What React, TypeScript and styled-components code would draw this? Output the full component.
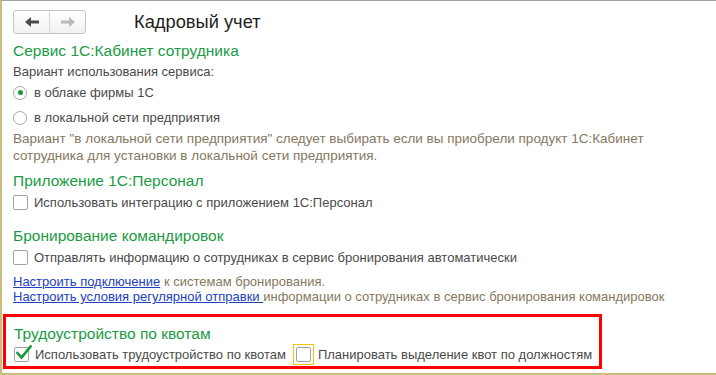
import styled, { createGlobalStyle } from "styled-components";

const GlobalStyle = createGlobalStyle`
  html, body {
    margin: 0;
    padding: 0;
    background: #ffffff;
  }
  body {
    font-family: "Liberation Sans", Arial, sans-serif;
  }
`;

const Frame = styled.div`
  width: 716px;
  height: 375px;
  box-sizing: border-box;
  border-top: 1px solid #a3a3a3;
  border-left: 2px solid #cbbd7c;
  border-bottom: 2px solid #cbbd7c;
  background: #ffffff;
  overflow: hidden;
  padding-left: 11px;
`;

const Header = styled.div`
  display: flex;
  align-items: center;
  height: 24px;
  margin-top: 9px;
`;

const NavGroup = styled.div`
  display: flex;
  width: 73px;
  height: 24px;
  box-sizing: border-box;
  border: 1px solid #c4c4c4;
  border-radius: 3px;
  background: linear-gradient(#ffffff, #f1f1f1);
`;

const NavButton = styled.div<{ $divider?: boolean }>`
  flex: 1;
  display: flex;
  align-items: center;
  justify-content: center;
  border-right: ${({ $divider }) => ($divider ? "1px solid #d6d6d6" : "none")};
`;

const Title = styled.div`
  margin-left: 48px;
  font-size: 18.3px;
  color: #1e1e1e;
`;

const Section = styled.div<{ $gap?: number }>`
  margin-top: ${({ $gap }) => $gap ?? 0}px;
`;

const SectionTitle = styled.div`
  font-size: 15.5px;
  line-height: 20px;
  color: #1b9b44;
`;

const Text = styled.div<{ $note?: boolean }>`
  font-size: ${({ $note }) => ($note ? 13.5 : 13)}px;
  line-height: ${({ $note }) => ($note ? 17 : 16)}px;
  color: ${({ $note }) => ($note ? "#85785e" : "#4a4a4a")};
`;

const Row = styled.div<{ $height?: number }>`
  display: flex;
  align-items: center;
  height: ${({ $height }) => $height ?? 20}px;
  font-size: 13px;
  color: #4a4a4a;
  white-space: nowrap;
`;

const Radio = styled.span<{ $on?: boolean }>`
  width: 14px;
  height: 14px;
  box-sizing: border-box;
  border: 1px solid #a8a8a8;
  border-radius: 50%;
  margin-right: 7px;
  display: flex;
  align-items: center;
  justify-content: center;
  background: #ffffff;

  &::after {
    content: "";
    width: 5px;
    height: 5px;
    border-radius: 50%;
    background: ${({ $on }) => ($on ? "#169a3e" : "transparent")};
  }
`;

const Box = styled.span`
  position: relative;
  width: 15px;
  height: 15px;
  box-sizing: border-box;
  border: 1px solid #a3a3a3;
  border-radius: 2px;
  background: #ffffff;
  flex-shrink: 0;

  svg {
    position: absolute;
    left: 1px;
    top: -3px;
  }
`;

const Focus = styled.span`
  display: flex;
  align-items: center;
  justify-content: center;
  width: 21px;
  height: 21px;
  box-sizing: border-box;
  border: 1px solid #f3c20c;
  margin-left: 7px;
  margin-right: 4px;
`;

const Label = styled.span<{ $gap?: number }>`
  margin-left: ${({ $gap }) => $gap ?? 6}px;
`;

const Links = styled.div`
  font-size: 13px;
  line-height: 15px;
  color: #85785e;
  white-space: nowrap;
`;

const Link = styled.a`
  color: #2140c0;
  text-decoration: underline;
`;

const Highlight = styled.div`
  width: 599px;
  height: 55px;
  box-sizing: border-box;
  margin-top: 10px;
  margin-left: -10px;
  padding: 7px 0 0 8px;
  border: 3px solid #ff0000;
`;

const BackArrow = ({ color }: { color: string }) => (
  <svg width="14" height="10" viewBox="0 0 14 10">
    <polygon points="0,5 6,0 6,10" fill={color} />
    <rect x="5" y="3.5" width="9" height="3" fill={color} />
  </svg>
);

const ForwardArrow = ({ color }: { color: string }) => (
  <svg width="14" height="10" viewBox="0 0 14 10">
    <polygon points="14,5 8,0 8,10" fill={color} />
    <rect x="0" y="3.5" width="9" height="3" fill={color} />
  </svg>
);

const CheckMark = () => (
  <svg width="16" height="15" viewBox="0 0 16 15">
    <polyline
      points="1.5,8 5.5,12.5 14.5,1.5"
      fill="none"
      stroke="#17993b"
      strokeWidth="2.6"
      strokeLinecap="square"
    />
  </svg>
);

export default function App() {
  return (
    <Frame>
      <GlobalStyle />
      <Header>
        <NavGroup>
          <NavButton $divider>
            <BackArrow color="#4a4a4a" />
          </NavButton>
          <NavButton>
            <ForwardArrow color="#b9b9b9" />
          </NavButton>
        </NavGroup>
        <Title>Кадровый учет</Title>
      </Header>

      <Section $gap={7}>
        <SectionTitle>Сервис 1С:Кабинет сотрудника</SectionTitle>
        <Text style={{ marginTop: 3 }}>Вариант использования сервиса:</Text>
        <Row $height={25}>
          <Radio $on />
          в облаке фирмы 1С
        </Row>
        <Row $height={25}>
          <Radio />
          в локальной сети предприятия
        </Row>
        <Text $note>
          Вариант "в локальной сети предприятия" следует выбирать если вы приобрели продукт 1С:Кабинет
          <br />
          сотрудника для установки в локальной сети предприятия.
        </Text>
      </Section>

      <Section $gap={7}>
        <SectionTitle>Приложение 1С:Персонал</SectionTitle>
        <Row $height={22}>
          <Box />
          <Label>Использовать интеграцию с приложением 1С:Персонал</Label>
        </Row>
      </Section>

      <Section $gap={13}>
        <SectionTitle>Бронирование командировок</SectionTitle>
        <Row $height={22}>
          <Box />
          <Label>Отправлять информацию о сотрудниках в сервис бронирования автоматически</Label>
        </Row>
        <Links style={{ marginTop: 6 }}>
          <Link>Настроить подключение</Link> к системам бронирования.
        </Links>
        <Links>
          <Link>Настроить условия регулярной отправки </Link>информации о сотрудниках в сервис
          бронирования командировок
        </Links>
      </Section>

      <Highlight>
        <SectionTitle>Трудоустройство по квотам</SectionTitle>
        <Row $height={21}>
          <Box>
            <CheckMark />
          </Box>
          <Label>Использовать трудоустройство по квотам</Label>
          <Focus>
            <Box />
          </Focus>
          Планировать выделение квот по должностям
        </Row>
      </Highlight>
    </Frame>
  );
}
